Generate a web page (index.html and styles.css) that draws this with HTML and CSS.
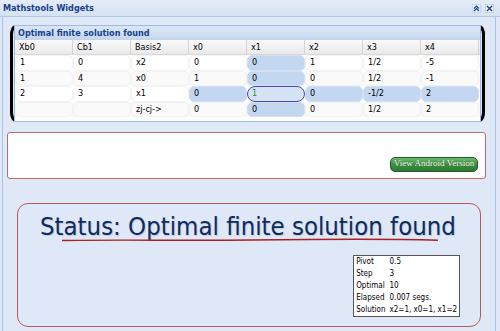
FILE: index.html
```html
<!DOCTYPE html>
<html lang="en">
<head>
  <meta charset="UTF-8">
  <title>Mathstools Widgets</title>
  <link rel="stylesheet" href="styles.css">
</head>
<body>
  <div class="widget">
    <!-- Window header -->
    <div class="widget__head">
      <span class="widget__title">Mathstools Widgets</span>
      <div class="widget__tools">
        <span class="tool">
          <svg width="7" height="7" viewBox="0 0 7 7"><path d="M1 3.5 L3.5 1 L6 3.5 M1 6 L3.5 3.5 L6 6" fill="none" stroke="#15428b" stroke-width="1.2"/></svg>
        </span>
        <span class="tool">
          <svg width="7" height="7" viewBox="0 0 7 7"><path d="M1 1 L6 6 M6 1 L1 6" fill="none" stroke="#15428b" stroke-width="1.3"/></svg>
        </span>
      </div>
    </div>

    <div class="widget__body">
      <!-- Simplex tableau -->
      <div class="tableau">
        <div class="grid-panel">
          <div class="grid-panel__title">Optimal finite solution found</div>
          <div class="grid">
            <div class="grid__row grid__row--head">
              <div class="hcell">Xb0</div>
              <div class="hcell">Cb1</div>
              <div class="hcell">Basis2</div>
              <div class="hcell">x0</div>
              <div class="hcell">x1</div>
              <div class="hcell">x2</div>
              <div class="hcell">x3</div>
              <div class="hcell">x4</div>
            </div>
            <div class="grid__row">
              <div class="cell">1</div>
              <div class="cell">0</div>
              <div class="cell">x2</div>
              <div class="cell">0</div>
              <div class="cell cell--col">0</div>
              <div class="cell">1</div>
              <div class="cell">1/2</div>
              <div class="cell">-5</div>
            </div>
            <div class="grid__row grid__row--alt">
              <div class="cell">1</div>
              <div class="cell">4</div>
              <div class="cell">x0</div>
              <div class="cell">1</div>
              <div class="cell cell--col">0</div>
              <div class="cell">0</div>
              <div class="cell">1/2</div>
              <div class="cell">-1</div>
            </div>
            <div class="grid__row">
              <div class="cell">2</div>
              <div class="cell">3</div>
              <div class="cell">x1</div>
              <div class="cell cell--col">0</div>
              <div class="cell cell--pivot">1</div>
              <div class="cell cell--col">0</div>
              <div class="cell cell--col">-1/2</div>
              <div class="cell cell--col">2</div>
            </div>
            <div class="grid__row grid__row--alt">
              <div class="cell"></div>
              <div class="cell"></div>
              <div class="cell">zj-cj-&gt;</div>
              <div class="cell">0</div>
              <div class="cell cell--col">0</div>
              <div class="cell">0</div>
              <div class="cell">1/2</div>
              <div class="cell">2</div>
            </div>
          </div>
        </div>
      </div>

      <!-- Android link box -->
      <div class="android">
        <a href="#" class="android__btn">View Android Version</a>
      </div>

      <!-- Status -->
      <div class="status">
        <div class="status__text">Status: Optimal finite solution found</div>
        <svg class="status__line" width="376" height="6" viewBox="0 0 376 6">
          <path d="M0 3.5 C 60 2.5, 120 3.8, 190 3 S 320 1.6, 376 3.2" fill="none" stroke="#a82020" stroke-width="1.4"/>
        </svg>
        <table class="info">
          <tr><td>Pivot</td><td>0.5</td></tr>
          <tr><td>Step</td><td>3</td></tr>
          <tr><td>Optimal</td><td>10</td></tr>
          <tr><td>Elapsed</td><td>0.007 segs.</td></tr>
          <tr><td>Solution</td><td>x2=1, x0=1, x1=2</td></tr>
        </table>
      </div>
    </div>
  </div>
</body>
</html>
```

FILE: styles.css
```css
body {
  margin: 0;
  background: #dfe8f6;
  font: 9px Tahoma, "DejaVu Sans Condensed", "DejaVu Sans", sans-serif;
  color: #000;
}

.widget {
  height: 331px;
  display: flex;
  flex-direction: column;
}

.widget__head {
  display: flex;
  align-items: center;
  justify-content: space-between;
  height: 16px;
  padding: 0 6px 0 3px;
  background: linear-gradient(#e4ecf7, #d5e2f2);
  border-bottom: 1px solid #b3c8e6;
}

.widget__title {
  font-weight: bold;
  color: #15428b;
  font-size: 9px;
}

.widget__tools {
  display: flex;
  gap: 4px;
  margin-top: 1px;
}

.tool {
  display: flex;
  align-items: center;
  justify-content: center;
  width: 9px;
  height: 9px;
  background: #eef3fa;
  border: 1px solid #c5d6ec;
  box-sizing: border-box;
}

.widget__body {
  flex: 1;
  margin: 0 4px 0 2px;
  border-left: 1px solid #a9c3e6;
  border-right: 1px solid #a9c3e6;
  padding: 5px 10px 0 7px;
}

/* tableau with bracket sides */
.tableau {
  border: 3px solid #000;
  border-top-color: transparent;
  border-bottom-color: transparent;
  border-radius: 12px;
  padding: 0 1px;
}

.grid-panel {
  background: #fff;
  border: 1px solid #99bbe8;
  border-top: 0;
  padding-bottom: 4px;
}

.grid-panel__title {
  height: 14px;
  line-height: 14px;
  padding-left: 3px;
  font-weight: bold;
  color: #15428b;
  background: linear-gradient(#dbe6f5 0, #d0def2 60%, #c2d4ee 100%);
  border-top: 1px solid #99bbe8;
}

.grid__row {
  display: grid;
  grid-template-columns: repeat(8, 58px);
  height: 15.5px;
}

.grid__row--alt {
  background: #fafafa;
}

.grid__row--head {
  height: 15px;
  box-sizing: border-box;
  background: linear-gradient(#fafafa, #e9e9e9);
  border-bottom: 1px solid #d8d8d8;
}

.hcell {
  padding-left: 4px;
  line-height: 14px;
  border-right: 1px solid #d4d4d4;
}

.cell {
  padding-left: 4px;
  line-height: 13px;
  border: 1px solid #f2f2f2;
  border-radius: 5px;
}

.cell--col {
  background: #c4d7f1;
  border-color: #d2e0f4;
}

.cell--pivot {
  background: #d6e3f5;
  border-color: #4b45b0;
  border-radius: 8px;
  color: #2f8a2f;
}

/* android link */
.android {
  display: flex;
  justify-content: flex-end;
  align-items: flex-end;
  height: 47px;
  margin: 7px -1px 0 -3px;
  padding: 0 7px 6px 0;
  box-sizing: border-box;
  background: #fff;
  border: 1px solid #c06a6a;
  border-radius: 3px;
}

.android__btn {
  width: 88px;
  height: 15px;
  line-height: 14px;
  text-align: center;
  box-sizing: border-box;
  font: 9px "Liberation Serif", serif;
  color: #fff;
  text-decoration: none;
  text-shadow: 0 0 1px #1c4d1c;
  background: linear-gradient(#6cbb6c, #3c913c 50%, #2c7a33);
  border: 1px solid #1f5a35;
  border-radius: 5px;
}

/* status */
.status {
  position: relative;
  height: 124px;
  margin: 24px 4px 0 7px;
  box-sizing: border-box;
  padding: 6px 0 0 22px;
  border: 1px solid #b55a5a;
  border-radius: 11px;
}

.status__text {
  font: 25.5px Tahoma, "DejaVu Sans Condensed", "DejaVu Sans", sans-serif;
  color: #0b2c63;
  text-shadow: 1px 1px 1px #c8c8d0;
  white-space: nowrap;
  line-height: 32px;
}

.status__line {
  position: absolute;
  left: 44px;
  top: 33px;
}

.info {
  margin: 13px 20px 0 auto;
  background: #fff;
  border: 1px solid #555;
  border-collapse: separate;
  border-spacing: 0;
  font-size: 8px;
}

.info td {
  padding: 0 2px;
  height: 12px;
  line-height: 12px;
}
```
